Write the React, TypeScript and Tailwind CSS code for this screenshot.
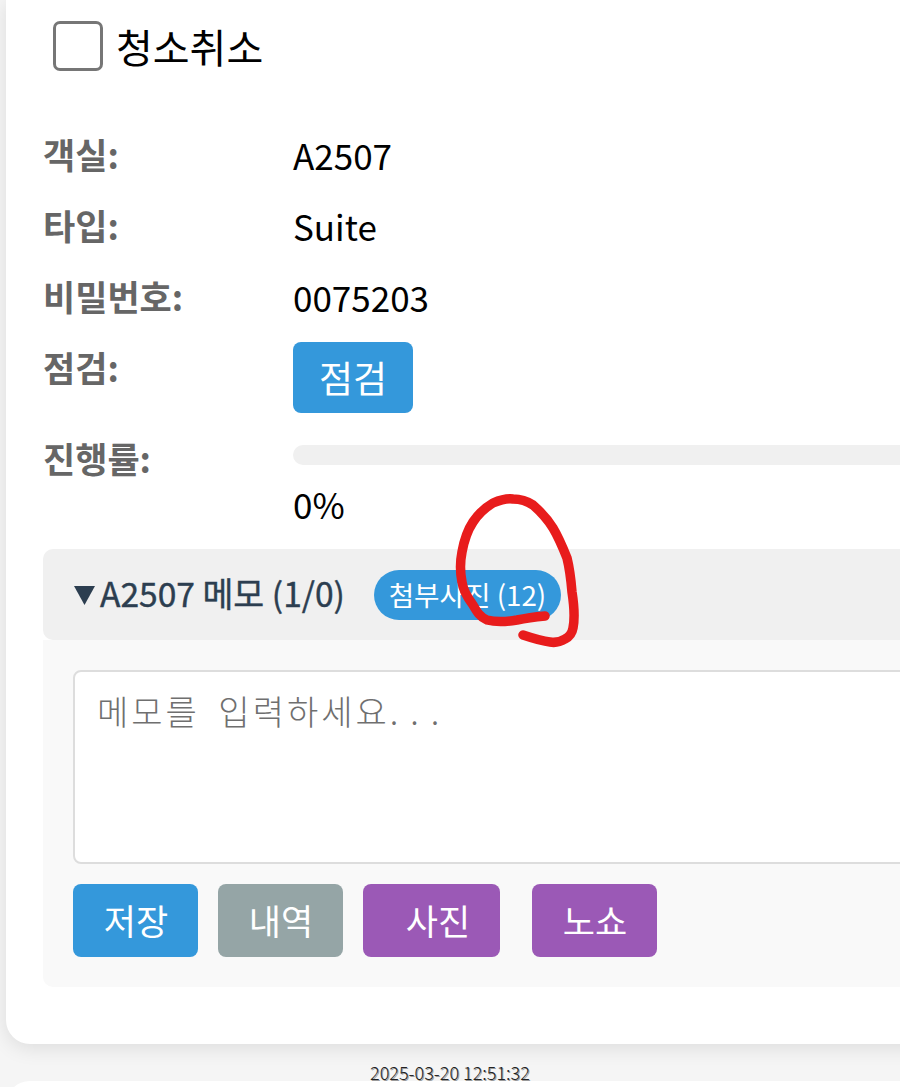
export default function App() {
  const font = { fontFamily: '"Noto Sans CJK KR", "Noto Sans", sans-serif' };
  const labelCls = "w-[250px] shrink-0 text-[35px] leading-[44px] font-bold text-[#666666]";
  const Row = ({ label, value }: { label: string; value: string }) => (
    <div className="flex h-[71px]">
      <div className={labelCls}>{label}</div>
      <div className="text-[35px] leading-[46px] text-black">{value}</div>
    </div>
  );
  return (
    <div className="relative w-[900px] h-[1087px] overflow-hidden bg-[#f5f5f5]" style={font}>
      <div className="ml-[6px] w-[1200px] h-[1045px] -mt-px rounded-b-[24px] bg-white pt-[22px] pl-[37px] shadow-[0_4px_20px_rgba(0,0,0,0.1)]">
        <div className="flex items-center pl-[10px] h-[50px] gap-[13px]">
          <div className="w-[50px] h-[50px] rounded-[7px] border-[3px] border-[#767676] bg-white" />
          <span className="text-[40px] leading-[48px] text-black">청소취소</span>
        </div>
        <div className="mt-[61px]">
          <Row label="객실:" value="A2507" />
          <Row label="타입:" value="Suite" />
          <Row label="비밀번호:" value="0075203" />
          <div className="flex h-[94px] -mt-[3px]">
            <div className={`${labelCls} mt-[3px]`}>점검:</div>
            <div className="w-[120px] h-[71px] rounded-[8px] bg-[#3498db] text-white text-[37px] flex items-center justify-center">점검</div>
          </div>
          <div className="flex h-[113px]">
            <div className={labelCls}>진행률:</div>
            <div className="flex-1">
              <div className="mt-[9px] h-[20px] rounded-full bg-[#f0f0f0]" />
              <div className="mt-[16px] text-[35px] leading-[46px] text-black">0%</div>
            </div>
          </div>
        </div>
        <div className="h-[91px] rounded-[10px] bg-[#f0f0f0] flex items-center pl-[31px]">
          <svg className="mr-[5px] mt-[2px]" width="21" height="19" viewBox="0 0 21 19"><polygon points="0,0 21,0 10.5,19" fill="#2c3e50" /></svg>
          <span className="text-[33.6px] text-[#2c3e50] leading-[44px] -mt-[4px] [-webkit-text-stroke:0.4px_#2c3e50]">A2507 메모 (1/0)</span>
          <span className="ml-[29px] h-[50px] w-[187px] rounded-full bg-[#3498db] text-white text-[27.7px] flex items-center justify-center">첨부사진 (12)</span>
        </div>
        <div className="h-[347px] rounded-b-[10px] bg-[#f9f9f9] pt-[30px] pl-[30px]">
          <div className="h-[194px] rounded-[8px] border-2 border-[#dddddd] bg-white pt-[13px] pl-[22px] text-[34px] font-light tracking-[3px] [word-spacing:8px] leading-[52px] text-[#6f6f6f]">메모를 입력하세요<span className="tracking-[12px]">...</span></div>
          <div className="flex mt-[20px] text-white text-[35px]">
            <div className="w-[125px] h-[73px] rounded-[8px] bg-[#3498db] flex items-center justify-center pl-[1px]">저장</div>
            <div className="ml-[20px] w-[125px] h-[73px] rounded-[8px] bg-[#95a5a6] flex items-center justify-center pl-[1px]">내역</div>
            <div className="ml-[20px] w-[137px] h-[73px] rounded-[8px] bg-[#9b59b6] flex items-center justify-center pl-[13px]">사진</div>
            <div className="ml-[32px] w-[125px] h-[73px] rounded-[8px] bg-[#9b59b6] flex items-center justify-center pl-[1px]">노쇼</div>
          </div>
        </div>
      </div>
      <div className="relative z-10 text-center text-[18px] font-light leading-[20px] text-[#222222] mt-[18px] [text-shadow:1px_1px_0_#999999]">2025-03-20 12:51:32</div>
      <div className="absolute left-[6px] top-[1081px] w-[1200px] h-[40px] rounded-t-[24px] bg-white" />
      <svg className="absolute left-0 top-0 pointer-events-none z-20" width="900" height="1087" fill="none">
        <path d="M545 616 C535 617 527 618 517 620 C505 622 495 622 487 620 C480 617 477 612 473 605 C467 597 463 590 462 582 C460 572 460 562 462 552 C464 541 467 531 473 522 C479 513 486 507 493 503 C500 500 506 498 513 499 C520 499 527 501 533 505 C541 512 548 520 553 528 C559 538 563 548 567 558 C570 570 571 580 572 592 C574 605 575 618 573 628 C572 634 569 637 565 639 C560 642 555 643 550 642 C541 641 532 638 523 635" stroke="#e81c1c" strokeWidth="9.5" strokeLinecap="round" strokeLinejoin="round" />
      </svg>
    </div>
  );
}
